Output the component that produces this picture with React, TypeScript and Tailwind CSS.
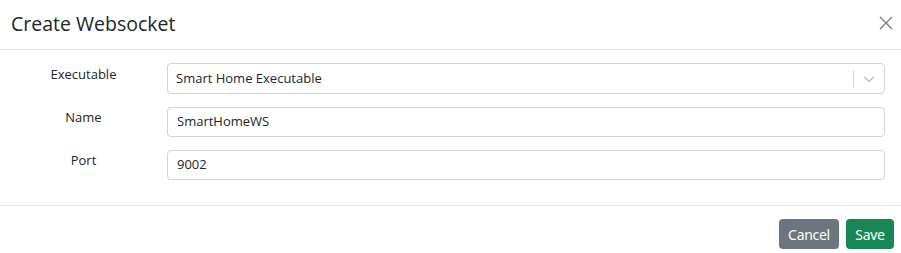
import React from "react";

export default function App() {
  return (
    <div className="w-[901px] h-[253px] bg-white text-[#212529] overflow-hidden" style={{ fontFamily: '"Open Sans", "Noto Sans", sans-serif' }}>
      <div className="h-[50px] flex items-center justify-between border-b border-[#e5e7eb] pl-[11px] pr-[8px]">
        <h5 className="text-[19.5px] leading-[24px] font-normal text-[#212529] -mt-[1px]">Create Websocket</h5>
        <svg width="14" height="14" viewBox="0 0 14 14" className="-mt-[3px]">
          <path d="M1 1L13 13M13 1L1 13" stroke="#7a7a7a" strokeWidth="1.4" />
        </svg>
      </div>
      <div className="h-[155px] pt-[13px] pr-[16px] flex flex-col gap-[13px]">
        <div className="flex items-center">
          <label className="w-[167px] text-center text-[13px] -mt-[8px]">Executable</label>
          <div className="flex-1 h-[31px] border border-[#ced4da] rounded-[4px] flex items-center justify-between pl-[8px]">
            <span className="text-[13px]">Smart Home Executable</span>
            <div className="flex items-center h-full">
              <div className="w-[1px] h-[16px] bg-[#d0d0d0]" />
              <svg width="30" height="12" viewBox="0 0 30 12">
                <path d="M10 4L15 8.5L20 4" stroke="#b8b8b8" strokeWidth="1.3" fill="none" />
              </svg>
            </div>
          </div>
        </div>
        <div className="flex items-center">
          <label className="w-[167px] text-center text-[13px] -mt-[8px]">Name</label>
          <div className="flex-1 h-[30px] border border-[#ced4da] rounded-[4px] flex items-center pl-[9px] text-[13px]">SmartHomeWS</div>
        </div>
        <div className="flex items-center">
          <label className="w-[167px] text-center text-[13px] -mt-[8px]">Port</label>
          <div className="flex-1 h-[30px] border border-[#ced4da] rounded-[4px] flex items-center pl-[9px] text-[13px]">9002</div>
        </div>
      </div>
      <div className="border-t border-[#e5e7eb] flex justify-end gap-[7px] pt-[13px] pr-[7px]">
        <button className="h-[30px] w-[60px] rounded-[4px] bg-[#6c757d] text-white text-[14px]" style={{ fontFamily: '"Noto Sans", sans-serif', letterSpacing: '-0.3px' }}>Cancel</button>
        <button className="h-[30px] w-[48px] rounded-[4px] bg-[#198754] text-white text-[14px]" style={{ fontFamily: '"Noto Sans", sans-serif', letterSpacing: '-0.3px' }}>Save</button>
      </div>
    </div>
  );
}
